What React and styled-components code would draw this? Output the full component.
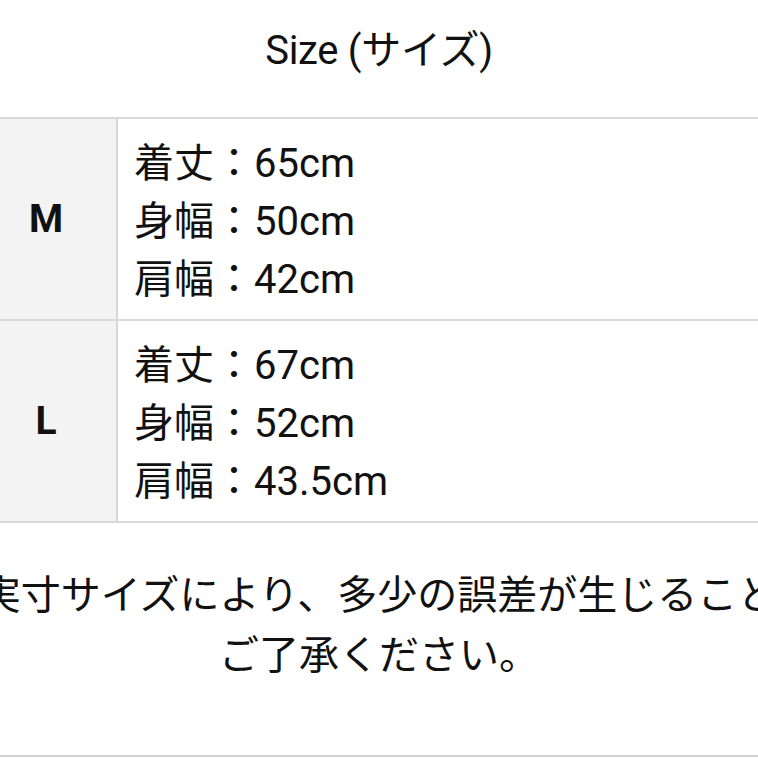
import React from "react";
import styled, { createGlobalStyle } from "styled-components";

const GlobalStyle = createGlobalStyle`
  html, body {
    margin: 0;
    padding: 0;
    background: #ffffff;
  }
  body {
    width: 758px;
    height: 758px;
    overflow: hidden;
    font-family: Roboto, "Noto Sans CJK JP", sans-serif;
    color: #111111;
  }
`;

const Page = styled.div`
  width: 758px;
  height: 758px;
  display: flex;
  flex-direction: column;
  overflow: hidden;
`;

const Title = styled.h1`
  margin: 0;
  height: 117px;
  display: flex;
  align-items: center;
  justify-content: center;
  padding-bottom: 24px;
  box-sizing: border-box;
  font-size: 40px;
  font-weight: 400;
  letter-spacing: -0.3px;
`;

const SizeTable = styled.div`
  margin: 0 -24px;
  border-top: 2px solid #d8d8d8;
  display: flex;
  flex-direction: column;
`;

const SizeRow = styled.div`
  display: grid;
  grid-template-columns: 142px 1fr;
  border-bottom: 2px solid #d8d8d8;
`;

const LabelCell = styled.div`
  background: #f3f3f3;
  border-right: 2px solid #d8d8d8;
  display: flex;
  align-items: center;
  justify-content: center;
  font-size: 39px;
  font-weight: 700;
  color: #111;
`;

const ValueCell = styled.div`
  padding: 16px 16px 10px;
  display: flex;
  flex-direction: column;
`;

const ValueLine = styled.div`
  font-size: 40px;
  line-height: 58px;
  white-space: nowrap;
`;

const Note = styled.div`
  margin-top: 43px;
  display: flex;
  flex-direction: column;
`;

const NoteLine = styled.div`
  display: flex;
  justify-content: center;
  font-size: 40px;
  line-height: 60px;
`;

const NoteText = styled.span`
  white-space: nowrap;
  flex-shrink: 0;
`;

const Divider = styled.div`
  margin-top: auto;
  margin-bottom: 1px;
  border-top: 2px solid #d0d0d0;
`;

const sizes = [
  { label: "M", values: ["65cm", "50cm", "42cm"] },
  { label: "L", values: ["67cm", "52cm", "43.5cm"] },
];

const names = ["着丈", "身幅", "肩幅"];

export default function App() {
  return (
    <>
      <GlobalStyle />
      <Page>
        <Title>Size (サイズ)</Title>
        <SizeTable>
          {sizes.map((s) => (
            <SizeRow key={s.label}>
              <LabelCell>{s.label}</LabelCell>
              <ValueCell>
                {s.values.map((v, i) => (
                  <ValueLine key={i}>
                    {names[i]}：{v}
                  </ValueLine>
                ))}
              </ValueCell>
            </SizeRow>
          ))}
        </SizeTable>
        <Note>
          <NoteLine>
            <NoteText>実寸サイズにより、多少の誤差が生じること</NoteText>
          </NoteLine>
          <NoteLine>
            <NoteText>ご了承ください。</NoteText>
          </NoteLine>
        </Note>
        <Divider />
      </Page>
    </>
  );
}
